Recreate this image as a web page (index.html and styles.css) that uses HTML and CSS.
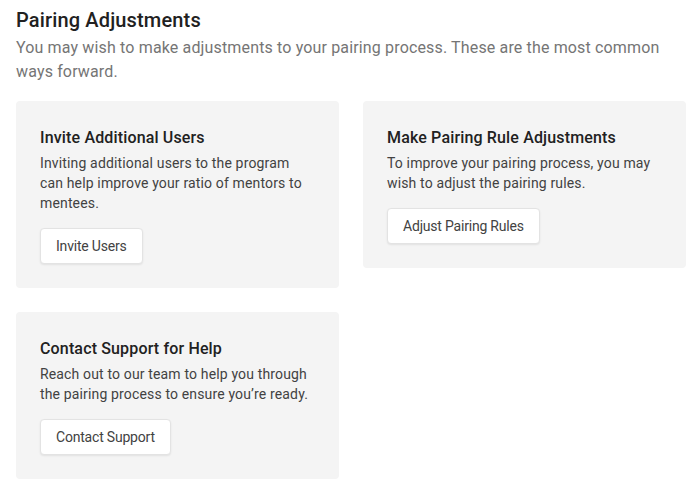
FILE: index.html
```html
<!DOCTYPE html>
<html lang="en">
<head>
    <meta charset="UTF-8">
    <meta name="viewport" content="width=device-width, initial-scale=1.0">
    <title>Pairing Adjustments</title>
    <link rel="stylesheet" href="styles.css">
</head>
<body>
    <div class="page">
        <h1 class="page-title">Pairing Adjustments</h1>
        <p class="page-intro">You may wish to make adjustments to your pairing process. These are the most common ways forward.</p>

        <div class="cards">
            <div class="card">
                <h3 class="card-title">Invite Additional Users</h3>
                <p class="card-text">Inviting additional users to the program can help improve your ratio of mentors to mentees.</p>
                <button class="card-btn">Invite Users</button>
            </div>

            <div class="card">
                <h3 class="card-title">Make Pairing Rule Adjustments</h3>
                <p class="card-text">To improve your pairing process, you may wish to adjust the pairing rules.</p>
                <button class="card-btn">Adjust Pairing Rules</button>
            </div>

            <div class="card">
                <h3 class="card-title">Contact Support for Help</h3>
                <p class="card-text">Reach out to our team to help you through the pairing process to ensure you’re ready.</p>
                <button class="card-btn">Contact Support</button>
            </div>
        </div>
    </div>
</body>
</html>
```

FILE: styles.css
```css
body {
    margin: 0;
    font-family: Roboto, "Liberation Sans", Arial, sans-serif;
    background: #fff;
    color: #212121;
    letter-spacing: 0.15px;
}
.page {
    width: 670px;
    padding: 6px 16px 16px;
}
.page-title {
    margin: 0;
    font-size: 20px;
    line-height: 28px;
    font-weight: 500;
    color: #212121;
}
.page-intro {
    margin: 2px 0 17px;
    font-size: 16px;
    line-height: 24px;
    color: #757575;
}
.cards {
    display: grid;
    grid-template-columns: 1fr 1fr;
    gap: 24px;
    align-items: start;
}
.card {
    background: #f4f4f4;
    border-radius: 4px;
    padding: 25px 24px 24px;
}
.card-title {
    margin: 0 0 3px;
    font-size: 16px;
    line-height: 24px;
    font-weight: 500;
    color: #212121;
}
.card-text {
    margin: 0 0 15px;
    font-size: 14px;
    line-height: 20px;
    color: #424242;
}
.card-btn {
    display: block;
    height: 36px;
    padding: 0 15px;
    font-family: inherit;
    font-size: 14px;
    letter-spacing: -0.2px;
    color: #424242;
    background: #fff;
    border: 1px solid #e3e3e3;
    border-radius: 4px;
    box-shadow: 0 1px 2px rgba(0, 0, 0, 0.08);
    cursor: pointer;
}
```
